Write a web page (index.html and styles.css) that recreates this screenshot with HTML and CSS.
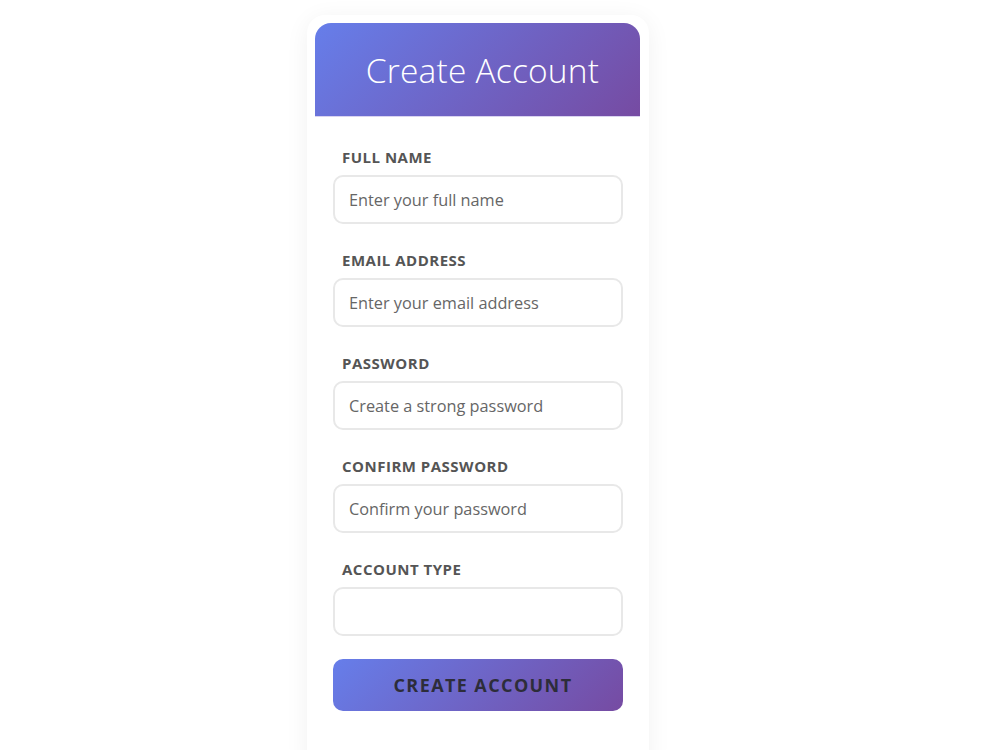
FILE: index.html
```html
<!DOCTYPE html>
<html lang="en">
<head>
<meta charset="utf-8">
<title>Create Account</title>
<link rel="stylesheet" href="styles.css">
</head>
<body>
<div class="page">
  <div class="card">
    <div class="card-header">
      <h1 class="title">Create Account</h1>
    </div>
    <form class="form">
      <div class="field">
        <label class="label">Full Name</label>
        <input class="input" type="text" placeholder="Enter your full name">
      </div>
      <div class="field">
        <label class="label">Email Address</label>
        <input class="input" type="email" placeholder="Enter your email address">
      </div>
      <div class="field">
        <label class="label">Password</label>
        <input class="input" type="password" placeholder="Create a strong password">
      </div>
      <div class="field">
        <label class="label">Confirm Password</label>
        <input class="input" type="password" placeholder="Confirm your password">
      </div>
      <div class="field">
        <label class="label">Account Type</label>
        <div class="input select"></div>
      </div>
      <button class="submit" type="button">Create Account</button>
    </form>
  </div>
</div>
</body>
</html>
```

FILE: styles.css
```css
* { box-sizing: border-box; }
html, body { margin: 0; padding: 0; background: #ffffff; }
body { font-family: "Open Sans", "Noto Sans", sans-serif; }
.page {
  width: 1000px;
  height: 750px;
  overflow: hidden;
  padding: 15px 0 0 307px;
}
.card {
  width: 342px;
  height: 760px;
  background: #fff;
  border-radius: 18px;
  padding: 8px 9px 0 8px;
  box-shadow: 0 4px 24px rgba(0,0,0,0.06);
}
.card-header {
  height: 94px;
  border-radius: 16px 16px 0 0;
  background: linear-gradient(135deg, #667eea 0%, #764ba2 100%);
  display: flex;
  align-items: center;
  justify-content: center;
  padding-left: 10px;
  border-bottom: 1px solid #d9d3f0;
}
.title {
  margin: 0;
  color: #fff;
  font-weight: 300;
  font-size: 33.5px;
  letter-spacing: 0.2px;
}
.form {
  padding: 30px 17px 0 18px;
  display: flex;
  flex-direction: column;
}
.field {
  display: flex;
  flex-direction: column;
  margin-bottom: 26px;
}
.label {
  font-size: 15px;
  font-weight: 700;
  color: #555;
  text-transform: uppercase;
  letter-spacing: 0.5px;
  line-height: 20px;
  margin: 0 0 8px 9px;
}
.input {
  height: 49px;
  border: 2px solid #e8e8e8;
  border-radius: 10px;
  padding: 0 14px;
  font-family: inherit;
  font-size: 16.3px;
  color: #333;
  background: #fff;
  outline: none;
}
.input::placeholder { color: #666; opacity: 1; }
.field:last-of-type { margin-bottom: 23px; }
.submit {
  height: 52px;
  border: none;
  border-radius: 10px;
  background: linear-gradient(135deg, #667eea 0%, #764ba2 100%);
  color: #2d2d3a;
  font-family: inherit;
  font-size: 18px;
  font-weight: 700;
  letter-spacing: 1.4px;
  text-transform: uppercase;
  padding-left: 16px;
}
```
